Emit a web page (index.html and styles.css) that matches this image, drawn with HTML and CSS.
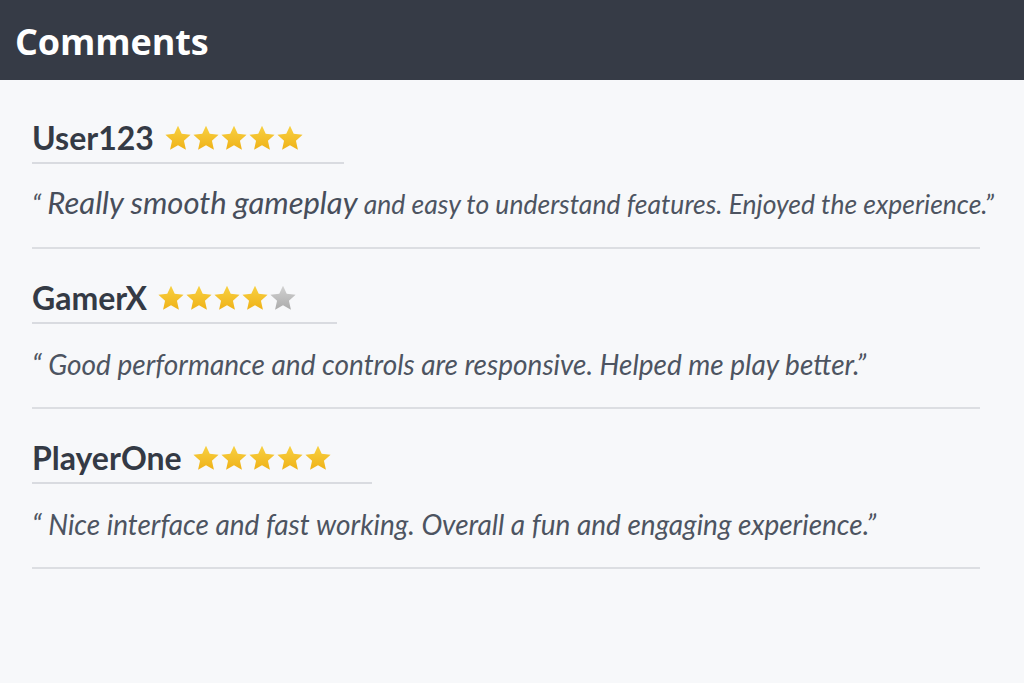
FILE: index.html
```html
<!DOCTYPE html>
<html lang="en">
<head>
<meta charset="utf-8">
<title>Comments</title>
<link rel="stylesheet" href="styles.css">
</head>
<body>
<svg width="0" height="0" class="defs" aria-hidden="true">
  <defs>
    <linearGradient id="gold" x1="0" y1="0" x2="0" y2="1">
      <stop offset="0" stop-color="#f8d142"/>
      <stop offset="1" stop-color="#efb218"/>
    </linearGradient>
    <linearGradient id="grey" x1="0" y1="0" x2="0" y2="1">
      <stop offset="0" stop-color="#d2d2d2"/>
      <stop offset="1" stop-color="#ababab"/>
    </linearGradient>
    <symbol id="star" viewBox="0 0 24 24">
      <path d="M12 1.4l3.2 7 7.6.8-5.7 5.2 1.7 7.6L12 18.2l-6.8 3.8 1.7-7.6-5.7-5.2 7.6-.8z"/>
    </symbol>
  </defs>
</svg>
<header class="topbar">
  <h1 class="title">Comments</h1>
</header>
<main class="list">
  <article class="item">
    <div class="head">
      <span class="name">User123</span>
      <span class="stars">
        <svg class="star on"><use href="#star"/></svg><svg class="star on"><use href="#star"/></svg><svg class="star on"><use href="#star"/></svg><svg class="star on"><use href="#star"/></svg><svg class="star on"><use href="#star"/></svg>
      </span>
    </div>
    <p class="quote small">“ <span class="big">Really smooth gameplay</span> and easy to understand features. Enjoyed the experience.”</p>
  </article>
  <article class="item">
    <div class="head">
      <span class="name">GamerX</span>
      <span class="stars">
        <svg class="star on"><use href="#star"/></svg><svg class="star on"><use href="#star"/></svg><svg class="star on"><use href="#star"/></svg><svg class="star on"><use href="#star"/></svg><svg class="star off"><use href="#star"/></svg>
      </span>
    </div>
    <p class="quote">“ Good performance and controls are responsive. Helped me play better.”</p>
  </article>
  <article class="item">
    <div class="head">
      <span class="name">PlayerOne</span>
      <span class="stars">
        <svg class="star on"><use href="#star"/></svg><svg class="star on"><use href="#star"/></svg><svg class="star on"><use href="#star"/></svg><svg class="star on"><use href="#star"/></svg><svg class="star on"><use href="#star"/></svg>
      </span>
    </div>
    <p class="quote">“ Nice interface and fast working. Overall a fun and engaging experience.”</p>
  </article>
</main>
</body>
</html>
```
FILE: styles.css
```css
* { box-sizing: border-box; }
html, body { margin: 0; padding: 0; }
body {
  width: 1024px;
  height: 683px;
  overflow: hidden;
  background: #f7f8fa;
  font-family: "Open Sans", "Liberation Sans", sans-serif;
  color: #333944;
}
.defs { position: absolute; width: 0; height: 0; }
.topbar {
  height: 80px;
  background: #363b46;
  display: flex;
  align-items: center;
  padding-left: 15px;
}
.title {
  margin: 0;
  color: #ffffff;
  font-family: "Open Sans", sans-serif;
  font-weight: 700;
  font-size: 36px;
  letter-spacing: -0.1px;
  line-height: 44px;
  padding-top: 4px;
}
.list {
  padding: 9px 44px 0 32px;
}
.item {
  padding-top: 32px;
  border-bottom: 2px solid #dcdee2;
}
.head {
  display: inline-flex;
  align-items: center;
  height: 43px;
  padding: 0 40px 7px 0;
  border-bottom: 2px solid #d9dbe0;
}
.name {
  font-family: "Lato", sans-serif;
  font-weight: 700;
  font-size: 32px;
  color: #343a45;
  line-height: 36px;
}
.stars {
  display: inline-flex;
  gap: 0;
  margin-left: 10px;
}
.star { width: 28px; height: 28px; }
.star.on { fill: url(#gold); }
.star.off { fill: url(#grey); }
.quote {
  margin: 21px 0 24px;
  font-family: "Lato", sans-serif;
  font-style: italic;
  font-size: 28px;
  line-height: 38px;
  height: 38px;
  color: #4d5461;
  white-space: nowrap;
}
.quote.small { font-size: 26.5px; }
.big { font-size: 31px; line-height: 30px; color: #474e5b; }
```
